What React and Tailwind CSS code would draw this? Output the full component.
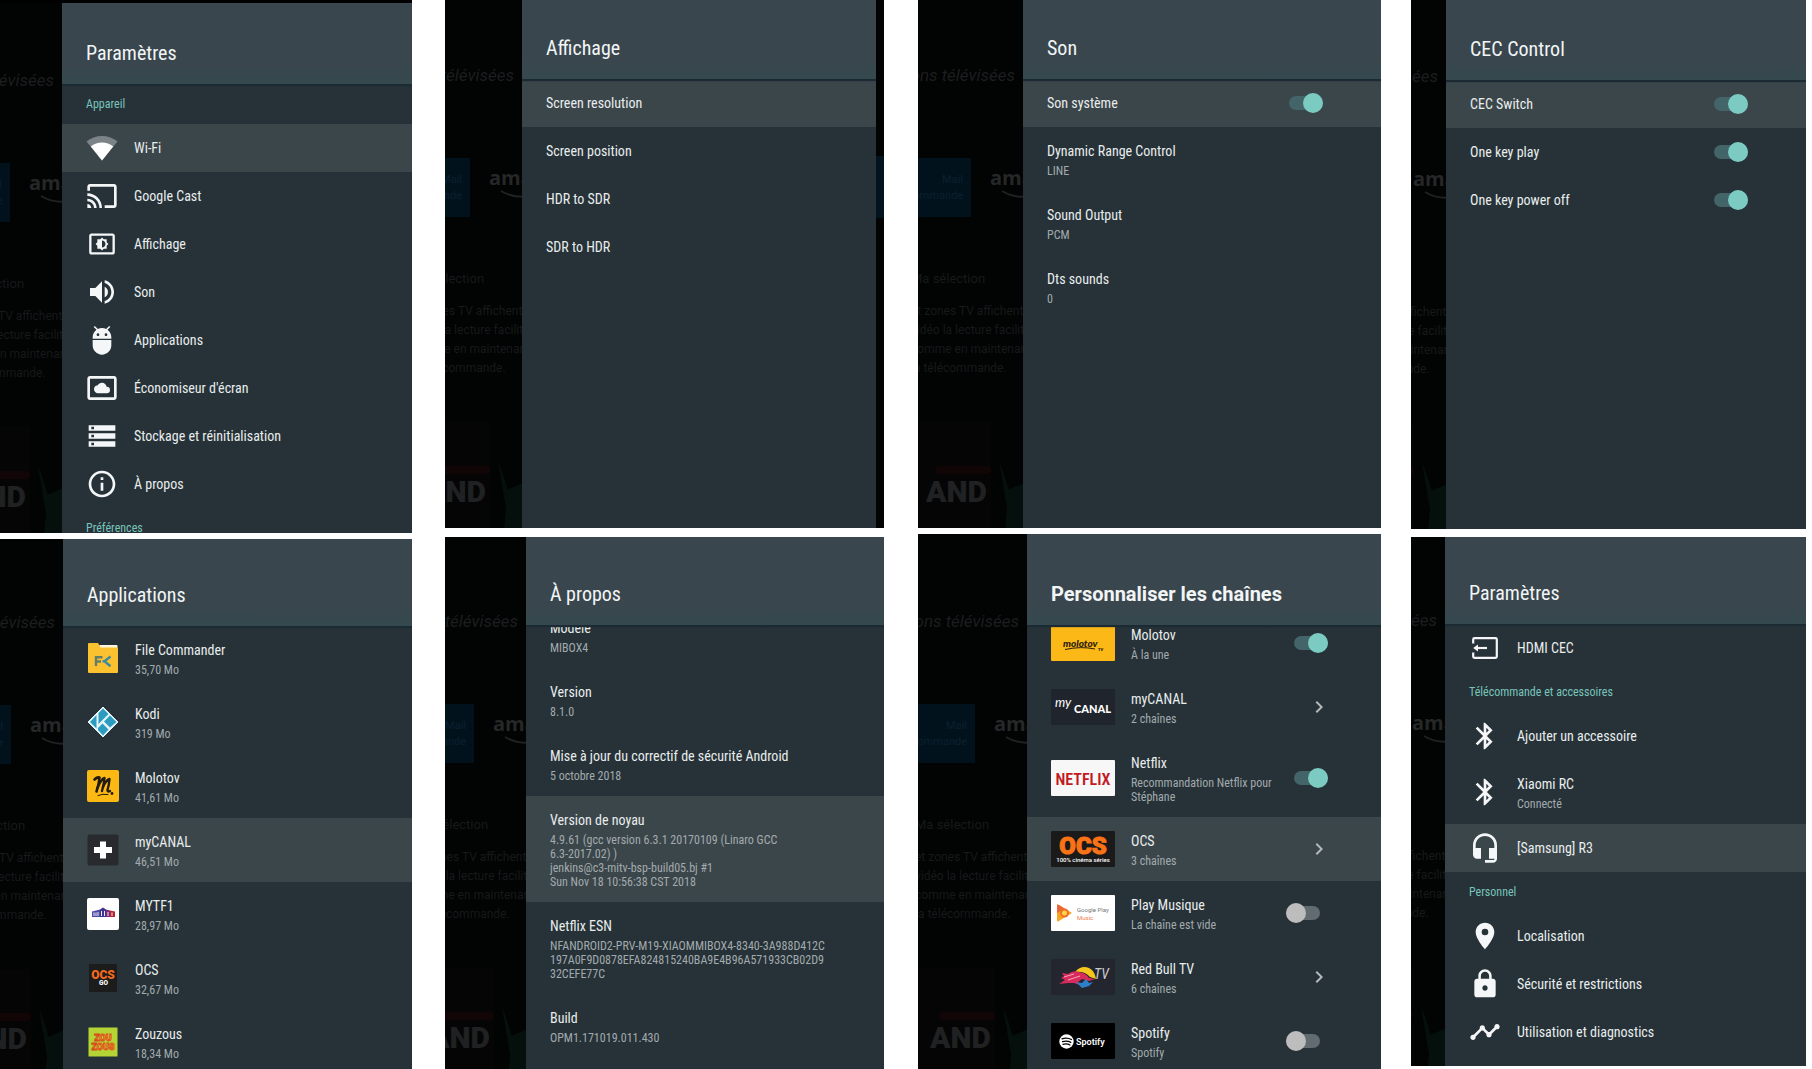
import clsx from 'clsx';
import {
  MdAdb,
  MdBluetooth,
  MdCast,
  MdChevronRight,
  MdHeadsetMic,
  MdInfoOutline,
  MdLocationOn,
  MdLock,
  MdSettingsBrightness,
  MdSettingsSystemDaydream,
  MdStorage,
  MdTimeline,
  MdVolumeUp,
} from 'react-icons/md';

/* ---------- Icons ---------- */

function WifiIcon() {
  return (
    <svg viewBox="0 0 32 32" className="w-8 h-8">
      <path d="M0.5 9.5C9 2 23 2 31.500 9.500L16 28.500Z" fill="#7d8487" />
      <path d="M4.800 14.500C11 9 21 9 27.200 14.500L16 28.500Z" fill="#fff" />
    </svg>
  );
}

function HdmiIcon() {
  return (
    <svg viewBox="0 0 32 32" className="w-8 h-8" fill="none" stroke="currentColor" strokeWidth="2.200">
      <path d="M4.200 11.500V7.500Q4.200 6.200 5.500 6.200H26.500Q27.800 6.200 27.800 7.500V24.500Q27.800 25.800 26.500 25.800H5.500Q4.200 25.800 4.200 24.500V20.500" />
      <path d="M18 16H6.500" />
      <path d="M9 12.500V19.500L4.200 16Z" fill="currentColor" stroke="none" />
    </svg>
  );
}

/* ---------- App logos, 32x32 ---------- */

function FileCommanderLogo() {
  return (
    <svg viewBox="0 0 32 32" className="w-8 h-8">
      <rect x="12" y="3" width="18.500" height="10" rx="1" fill="#fff6dc" />
      <path d="M1 2Q1 1 2 1H11L13.500 5.500H30Q31 5.500 31 6.500V30Q31 31 30 31H2Q1 31 1 30Z" fill="#fcc12f" />
      <path d="M9 24V15.200H15.500M9 19.500H14" fill="none" stroke="#5f7f6b" strokeWidth="2.400" />
      <path d="M23.500 14.500L17.500 19.300L23.500 24.200M15.500 19.300H18" fill="none" stroke="#3d8aa0" strokeWidth="2.400" />
    </svg>
  );
}

function KodiLogo() {
  return (
    <svg viewBox="0 0 32 32" className="w-8 h-8">
      <path d="M16 1L31 16L16 31L1 16Z" fill="#e4f4f9" stroke="#e4f4f9" strokeWidth="1" strokeLinejoin="round" />
      <path d="M16 2.500L21.500 8L11.500 18V7Z" fill="#2b9cc0" />
      <path d="M9.500 9L9.500 22.500L3 16Z" fill="#2b9cc0" />
      <path d="M23 9.500L29.500 16L23 21.500L17 15.500Z" fill="#2b9cc0" />
      <path d="M15.500 17.500L21.500 23.500L16 29.500L11 24V22Z" fill="#2b9cc0" />
    </svg>
  );
}

function MolotovLogo() {
  return (
    <svg viewBox="0 0 32 32" className="w-8 h-8">
      <rect width="32" height="32" rx="2" fill="#fdb913" />
      <g stroke="#231a10" fill="none" strokeLinecap="round" strokeLinejoin="round">
        <path d="M7.500 9.500Q10 7 12.500 7.500Q12 14 9.500 21.500" strokeWidth="2.600" />
        <path d="M10.500 18Q14 9 17.500 8Q17 14 15 21" strokeWidth="2.400" />
        <path d="M16 17Q19 10 22.500 9Q22 15 20.500 20Q20.500 22.500 23 21" strokeWidth="2.400" />
        <path d="M11 25.500Q16 23.500 21 24.500" strokeWidth="1" />
      </g>
      <circle cx="25" cy="23.500" r="1.400" fill="#231a10" />
    </svg>
  );
}

function CanalLogo() {
  return (
    <svg viewBox="0 0 32 32" className="w-8 h-8">
      <rect x="0.500" y="0.500" width="31" height="31" rx="2" fill="#282a2e" />
      <path d="M13 7.500H19V13H25V19H19V24.500H13V19H7V13H13Z" fill="#fff" />
    </svg>
  );
}

function Tf1Logo() {
  return (
    <svg viewBox="0 0 32 32" className="w-8 h-8">
      <rect width="32" height="32" rx="2" fill="#fff" />
      <path d="M5 13.500L13 11.500V19H5Z" fill="#4a4aa5" />
      <path d="M13 11.500L16 9.500L19 11.500V19H13Z" fill="#3f3590" />
      <path d="M19 11.500L23 12.500V19H19Z" fill="#7d2c7c" />
      <path d="M23 12.500L28 13.500V19H23Z" fill="#b3262f" />
      <path d="M7 14.500V18M9 14.500V18M11 14V18M14.500 13V18M17.500 13V18M21 14V18M25 14.500V18" stroke="#fff" strokeWidth="0.900" />
    </svg>
  );
}

function OcsGoLogo() {
  return (
    <svg viewBox="0 0 32 32" className="w-8 h-8">
      <rect x="2" y="2" width="28" height="28" fill="#1d1c1d" />
      <text x="16" y="16.500" textAnchor="middle" fontFamily="Roboto" fontSize="12" fontWeight="900" fill="#f26a1b">OCS</text>
      <text x="16.500" y="23" textAnchor="middle" fontFamily="Roboto" fontSize="6.500" fontWeight="900" fill="#fff">GO</text>
    </svg>
  );
}

function ZouzousLogo() {
  return (
    <svg viewBox="0 0 32 32" className="w-8 h-8">
      <rect x="1.500" y="1.500" width="29" height="29" fill="#b5d334" />
      <g fontFamily="Roboto" fontSize="9" fontWeight="900" fill="#f7a531" stroke="#d9481c" strokeWidth="0.800" textAnchor="middle">
        <text x="16" y="15">ZOU</text>
        <text x="16" y="23.500">ZOUS</text>
      </g>
    </svg>
  );
}

/* ---------- Channel banners, 64x36 ---------- */

function Banner({ fill, children }) {
  return (
    <svg viewBox="0 0 64 36" className="w-16 h-9 shrink-0">
      <rect width="64" height="36" rx="1" fill={fill} />
      {children}
    </svg>
  );
}

const banners = {
  molotov: (
    <Banner fill="#fcb817">
      <text x="12" y="22" fontFamily="Lato" fontSize="10" fontWeight="900" fontStyle="italic" fill="#2a1d0c">molotov</text>
      <path d="M14 24.500Q30 21 44 24" stroke="#2a1d0c" strokeWidth="1" fill="none" />
      <text x="47" y="26" fontFamily="Roboto" fontSize="4" fontWeight="900" fill="#2a1d0c">TV</text>
    </Banner>
  ),
  canal: (
    <Banner fill="#20242d">
      <text x="4" y="18" fontFamily="Lato" fontSize="13" fontStyle="italic" fill="#fff">my</text>
      <text x="23" y="24" fontFamily="Lato" fontSize="11" fontWeight="900" fill="#fff">CANAL</text>
    </Banner>
  ),
  netflix: (
    <Banner fill="#f7f7f8">
      <text x="32" y="25" textAnchor="middle" fontFamily="'Roboto Condensed', Roboto" fontSize="16" fontWeight="600" fill="#c11a23">NETFLIX</text>
    </Banner>
  ),
  ocs: (
    <Banner fill="#1b1a1b">
      <text x="32" y="22.500" textAnchor="middle" fontFamily="Roboto" fontSize="24" fontWeight="900" fill="#f97316" stroke="#f97316" strokeWidth="1">OCS</text>
      <text x="32" y="31" textAnchor="middle" fontFamily="Roboto" fontSize="6" fontWeight="500" fill="#fff">100% cinéma séries</text>
    </Banner>
  ),
  play: (
    <Banner fill="#fff">
      <path d="M6 10.500Q6 9 7.500 9.700L21 18L7.500 26.300Q6 27 6 25.500Z" fill="#f5a623" />
      <path d="M6 10.500Q6 9 7.500 9.700L14 13.700L6 18Z" fill="#e8663c" />
      <circle cx="13.500" cy="18" r="4.500" fill="#f26f21" />
      <circle cx="13.500" cy="18" r="2.500" fill="#fbd34d" />
      <text x="26" y="16.500" fontFamily="Roboto" fontSize="6" fill="#777">Google Play</text>
      <text x="26" y="24.500" fontFamily="Roboto" fontSize="6" fill="#ee7b4b">Music</text>
    </Banner>
  ),
  redbull: (
    <Banner fill="#23262f">
      <path d="M24 13Q30 6 38 9Q44 12 45 20L39 18Q34 12 24 13Z" fill="#f5c61c" />
      <path d="M9 11L11 14L17 15Q22 11 28 13Q35 14 38 19L44 20L38 22L31 20L27 23L29 26L23 24L17 24L8 25L14 21L10 19L13 17Z" fill="#d92a5c" />
      <path d="M25 23L31 24L35 20L38 24L42 23L38 27L31 29Z" fill="#2f7fc8" />
      <path d="M13 18L23 15M17 21L29 17" stroke="#f6a5bd" strokeWidth="1" />
      <text x="43" y="20" fontFamily="'Roboto Condensed', Roboto" fontSize="14" fontStyle="italic" fill="#c9cdd2">TV</text>
    </Banner>
  ),
  spotify: (
    <Banner fill="#000">
      <circle cx="15.500" cy="18.500" r="7.200" fill="#fff" />
      <path d="M11 15.800Q16 14 20.500 16.500M11.500 18.700Q16 17.300 19.800 19.300M12 21.300Q16 20.200 19 22" stroke="#000" strokeWidth="1.300" fill="none" strokeLinecap="round" />
      <text x="25" y="22" fontFamily="Roboto" fontSize="9" fontWeight="600" fill="#fff">Spotify</text>
    </Banner>
  ),
};

/* ---------- Building blocks ---------- */

// dimmed TV home screen, visible on the left of each settings panel
function Backdrop({ width, head }) {
  return (
    <div aria-hidden="true" className={clsx('shrink-0 flex justify-end overflow-hidden bg-[#020303]', width)}>
      <div className="w-[132px] shrink-0 flex flex-col whitespace-nowrap font-[Roboto,sans-serif] text-[#17191a]">
        <div className={clsx('shrink-0 flex items-end justify-end pr-2', head)}>
          <p className="-mb-2 text-[17px] leading-6 italic text-[#1c1e1f]">émissions télévisées</p>
        </div>
        <div className="mt-[79px] h-[59px] shrink-0 flex">
          <div className="w-20 shrink-0 bg-[#02121d] flex flex-col justify-center items-end pr-2 text-[11px] leading-4 text-[#0a202f]">
            <span>Mail</span>
            <span>commande</span>
          </div>
          <div className="ml-[19px] pt-2">
            <p className="text-xl leading-6 font-bold font-['Open_Sans',sans-serif] text-[#262728]">ama</p>
            <svg viewBox="0 0 60 10" className="w-[60px] h-[10px]">
              <path d="M12 1Q30 12 56 2" fill="none" stroke="#202122" strokeWidth="2" />
            </svg>
          </div>
        </div>
        <div className="pl-5 mt-[52px] text-xs">
          <p className="text-[13px] leading-5">Ma sélection</p>
          <p className="mt-[13px] leading-[19px]">et zones TV affichent</p>
          <p className="leading-[19px]">vidéo la lecture facilitée</p>
          <p className="leading-[19px]">comme en maintenant</p>
          <p className="leading-[19px]">la télécommande.</p>
        </div>
        <div className="mt-11 flex-1 flex gap-2">
          <div className="w-[100px] shrink-0 bg-[#060505] flex flex-col items-end">
            <div className="mt-11 w-14 h-2 rounded-full bg-[#120506]" />
            <p className="mr-1 text-3xl leading-9 font-black text-[#1f2122]">AND</p>
          </div>
          <svg viewBox="0 0 30 150" className="w-[30px] h-[150px]">
            <path d="M0 30Q8 50 12 66L30 58V150H4L10 90Z" fill="#05100d" />
          </svg>
        </div>
      </div>
    </div>
  );
}

function Screen({ title, boldTitle, width, head, size, className, bodyClass, edge, children }) {
  return (
    <section className={clsx('min-h-0 flex overflow-hidden bg-black', size, className)}>
      <Backdrop width={width} head={head} />
      <div className="flex-1 min-w-0 flex flex-col overflow-hidden bg-[#263238]">
        <header
          className={clsx(
            'shrink-0 relative z-10 flex items-end pl-6 pb-[18px] bg-linear-to-b from-[#3a464d] from-75% to-[#34494f] shadow-[0_2px_1px_#1c2a33]',
            head
          )}
        >
          <h2
            className={clsx(
              'text-xl leading-[26px] text-[#f1f5f6]',
              boldTitle && 'font-bold font-[Roboto,sans-serif]'
            )}
          >
            {title}
          </h2>
        </header>
        <div className={clsx('flex flex-col', bodyClass)}>{children}</div>
      </div>
      {edge && (
        <div aria-hidden="true" className="w-2 shrink-0 bg-[#030303] pt-[156px]">
          <div className="h-[62px] bg-[#03141f]" />
        </div>
      )}
    </section>
  );
}

function SectionLabel({ children }) {
  return <h3 className="h-10 shrink-0 pl-6 flex items-center text-xs text-[#78c4bb]">{children}</h3>;
}

function Row({ icon, label, detail, active, toggle, chevron, channel }) {
  const isToggle = toggle !== undefined;
  const Tag = isToggle ? 'label' : 'button';

  return (
    <Tag
      {...(isToggle ? {} : { type: 'button' })}
      className={clsx(
        'w-full shrink-0 flex items-center pl-6 text-left',
        channel ? 'pr-[53px]' : 'pr-[58px]',
        detail ? 'min-h-16' : 'h-12',
        active && 'bg-[#3b464b]'
      )}
    >
      {icon && (
        <span className={clsx('shrink-0 mr-4 flex items-center justify-center text-[#f4f6f7]', channel ? 'w-16' : 'w-8')}>
          {icon}
        </span>
      )}
      <span className={clsx('flex-1 min-w-0', detail && 'pt-[14px] pb-[13px]')}>
        <span className="block text-sm leading-5 text-[#e9eded]">{label}</span>
        {detail && (
          <span className="block mt-[3px] text-xs leading-[14px] text-[#a3aaad] whitespace-pre-line">{detail}</span>
        )}
      </span>
      {isToggle && (
        <input
          type="checkbox"
          role="switch"
          defaultChecked={toggle}
          className="appearance-none relative shrink-0 ml-1 mr-2 w-[34px] h-[14px] rounded-full bg-[#626b6f] checked:mr-0 checked:bg-[#436468] before:absolute before:-top-[3px] before:left-0 before:w-5 before:h-5 before:rounded-full before:bg-[#bdbdbd] checked:before:left-[14px] checked:before:bg-[#7ccbc2]"
        />
      )}
      {chevron && <MdChevronRight className="shrink-0 w-6 h-6 -mr-[3px] text-[#b4babc]" />}
    </Tag>
  );
}

/* ---------- Data ---------- */

const deviceRows = [
  { label: 'Wi-Fi', icon: <WifiIcon />, active: true },
  { label: 'Google Cast', icon: <MdCast size={32} /> },
  { label: 'Affichage', icon: <MdSettingsBrightness size={28} /> },
  { label: 'Son', icon: <MdVolumeUp size={32} /> },
  { label: 'Applications', icon: <MdAdb size={32} /> },
  { label: "Économiseur d'écran", icon: <MdSettingsSystemDaydream size={32} /> },
  { label: 'Stockage et réinitialisation', icon: <MdStorage size={32} /> },
  { label: 'À propos', icon: <MdInfoOutline size={32} /> },
];

const apps = [
  { label: 'File Commander', detail: '35,70 Mo', icon: <FileCommanderLogo /> },
  { label: 'Kodi', detail: '319 Mo', icon: <KodiLogo /> },
  { label: 'Molotov', detail: '41,61 Mo', icon: <MolotovLogo /> },
  { label: 'myCANAL', detail: '46,51 Mo', icon: <CanalLogo />, active: true },
  { label: 'MYTF1', detail: '28,97 Mo', icon: <Tf1Logo /> },
  { label: 'OCS', detail: '32,67 Mo', icon: <OcsGoLogo /> },
  { label: 'Zouzous', detail: '18,34 Mo', icon: <ZouzousLogo /> },
];

const displayRows = [
  { label: 'Screen resolution', active: true },
  { label: 'Screen position' },
  { label: 'HDR to SDR' },
  { label: 'SDR to HDR' },
];

const aboutRows = [
  { label: 'Modèle', detail: 'MIBOX4' },
  { label: 'Version', detail: '8.1.0' },
  { label: 'Mise à jour du correctif de sécurité Android', detail: '5 octobre 2018' },
  {
    label: 'Version de noyau',
    detail: '4.9.61 (gcc version 6.3.1 20170109 (Linaro GCC\n6.3-2017.02) )\njenkins@c3-mitv-bsp-build05.bj #1\nSun Nov 18 10:56:38 CST 2018',
    active: true,
  },
  {
    label: 'Netflix ESN',
    detail: 'NFANDROID2-PRV-M19-XIAOMMIBOX4-8340-3A988D412C\n197A0F9D0878EFA824815240BA9E4B96A571933CB02D9\n32CEFE77C',
  },
  { label: 'Build', detail: 'OPM1.171019.011.430' },
];

const soundRows = [
  { label: 'Son système', toggle: true, active: true },
  { label: 'Dynamic Range Control', detail: 'LINE' },
  { label: 'Sound Output', detail: 'PCM' },
  { label: 'Dts sounds', detail: '0' },
];

const channels = [
  { label: 'Molotov', detail: 'À la une', icon: banners.molotov, toggle: true },
  { label: 'myCANAL', detail: '2 chaînes', icon: banners.canal, chevron: true },
  { label: 'Netflix', detail: 'Recommandation Netflix pour\nStéphane', icon: banners.netflix, toggle: true },
  { label: 'OCS', detail: '3 chaînes', icon: banners.ocs, chevron: true, active: true },
  { label: 'Play Musique', detail: 'La chaîne est vide', icon: banners.play, toggle: false },
  { label: 'Red Bull TV', detail: '6 chaînes', icon: banners.redbull, chevron: true },
  { label: 'Spotify', detail: 'Spotify', icon: banners.spotify, toggle: false },
];

const cecRows = [
  { label: 'CEC Switch', toggle: true, active: true },
  { label: 'One key play', toggle: true },
  { label: 'One key power off', toggle: true },
];

const renderRows = (rows) => rows.map((row) => <Row key={row.label} {...row} />);

export default function App() {
  return (
    <main className="h-screen flex overflow-hidden bg-white pr-1.5 font-['Roboto_Condensed','Liberation_Sans_Narrow',Roboto,sans-serif]">
      {/* Paramètres / Applications */}
      <div className="flex-[412] min-w-0 mr-[33px] flex flex-col gap-1.5">
        <Screen title="Paramètres" width="w-[62px]" head="h-[81px]" size="flex-[530]" className="pt-[3px]">
          <SectionLabel>Appareil</SectionLabel>
          {renderRows(deviceRows)}
          <SectionLabel>Préférences</SectionLabel>
        </Screen>
        <Screen title="Applications" width="w-[63px]" head="h-[87px]" size="flex-[530]">
          {renderRows(apps)}
        </Screen>
      </div>

      {/* Affichage / À propos */}
      <div className="flex-[439] min-w-0 mr-[34px] flex flex-col gap-[9px]">
        <Screen title="Affichage" width="w-[77px]" head="h-[79px]" size="flex-[528]" edge>
          {renderRows(displayRows)}
        </Screen>
        <Screen title="À propos" width="w-[81px]" head="h-[88px]" size="flex-[532]" bodyClass="-mt-[21px]">
          {renderRows(aboutRows)}
        </Screen>
      </div>

      {/* Son / Chaînes */}
      <div className="flex-[463] min-w-0 mr-[30px] flex flex-col gap-1.5">
        <Screen title="Son" width="w-[105px]" head="h-[79px]" size="flex-[528]">
          {renderRows(soundRows)}
        </Screen>
        <Screen title="Personnaliser les chaînes" boldTitle width="w-[109px]" head="h-[91px]" size="flex-[535]" bodyClass="-mt-3.5">
          {channels.map((row) => (
            <Row key={row.label} channel {...row} />
          ))}
        </Screen>
      </div>

      {/* CEC / Paramètres */}
      <div className="flex-[395] min-w-0 pb-[3px] flex flex-col gap-2">
        <Screen title="CEC Control" width="w-[35px]" head="h-20" size="flex-[529]">
          {renderRows(cecRows)}
        </Screen>
        <Screen title="Paramètres" width="w-[34px]" head="h-[87px]" size="flex-[529]">
          <Row label="HDMI CEC" icon={<HdmiIcon />} />
          <SectionLabel>Télécommande et accessoires</SectionLabel>
          <Row label="Ajouter un accessoire" icon={<MdBluetooth size={32} />} />
          <Row label="Xiaomi RC" detail="Connecté" icon={<MdBluetooth size={32} />} />
          <Row label="[Samsung] R3" icon={<MdHeadsetMic size={32} />} active />
          <SectionLabel>Personnel</SectionLabel>
          <Row label="Localisation" icon={<MdLocationOn size={32} />} />
          <Row label="Sécurité et restrictions" icon={<MdLock size={32} />} />
          <Row label="Utilisation et diagnostics" icon={<MdTimeline size={32} />} />
        </Screen>
      </div>
    </main>
  );
}
